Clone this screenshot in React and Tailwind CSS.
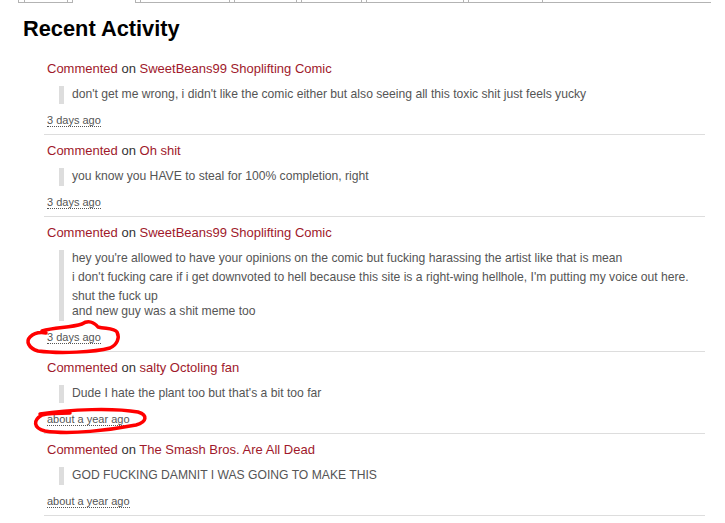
import React from "react";

const items = [
  {
    title: "SweetBeans99 Shoplifting Comic",
    paras: [["don't get me wrong, i didn't like the comic either but also seeing all this toxic shit just feels yucky"]],
    time: "3 days ago",
  },
  {
    title: "Oh shit",
    paras: [["you know you HAVE to steal for 100% completion, right"]],
    time: "3 days ago",
  },
  {
    title: "SweetBeans99 Shoplifting Comic",
    paras: [
      ["hey you're allowed to have your opinions on the comic but fucking harassing the artist like that is mean"],
      ["i don't fucking care if i get downvoted to hell because this site is a right-wing hellhole, I'm putting my voice out here."],
      ["shut the fuck up", "and new guy was a shit meme too"],
    ],
    time: "3 days ago",
  },
  {
    title: "salty Octoling fan",
    paras: [["Dude I hate the plant too but that's a bit too far"]],
    time: "about a year ago",
  },
  {
    title: "The Smash Bros. Are All Dead",
    paras: [["GOD FUCKING DAMNIT I WAS GOING TO MAKE THIS"]],
    time: "about a year ago",
  },
];

function Tab({ w, active }) {
  return (
    <div
      className={
        "h-[3px] border-l border-r border-[#b3b3b3] " + (active ? "" : "border-b")
      }
      style={{ width: w }}
    />
  );
}

function Gap({ w }) {
  return <div className="h-[3px] border-b border-[#b3b3b3]" style={{ width: w }} />;
}

export default function App() {
  return (
    <div
      className="relative w-[725px] h-[523px] bg-white overflow-hidden"
      style={{ fontFamily: '"Liberation Sans", Arial, sans-serif' }}
    >
      <div className="flex">
        <div className="h-[3px] w-[19px] border-r border-[#b3b3b3]" />
        <Gap w={5} />
        <Tab w={44} />
        <Gap w={4} />
        <Tab w={64} active />
        <Gap w={4} />
        <Tab w={90} />
        <Gap w={4} />
        <Tab w={63} />
        <Gap w={4} />
        <Tab w={61} />
        <Gap w={4} />
        <Tab w={98} />
        <Gap w={4} />
        <Tab w={75} />
        <Gap w={168} />
      </div>

      <h1 className="mt-[13px] pl-[23px] text-[21.8px] leading-[26px] font-bold text-black">
        Recent Activity
      </h1>

      <div className="ml-[44px] w-[661px] mt-[11px]">
        {items.map((it, i) => (
          <div key={i} className="border-b border-[#dddddd] pt-[8px] pb-[7px]">
            <div className="pl-[3px] text-[13px] leading-[15px] text-[#333]">
              <span className="text-[#a0192b]">Commented</span> on{" "}
              <span className="text-[#a0192b]">{it.title}</span>
            </div>
            <div className="mt-[10px] ml-[15px] border-l-[5px] border-[#dddddd] pl-[8px] pt-[1px] pb-[2px] text-[12.15px] leading-[15px] text-[#555]">
              {it.paras.map((p, j) => (
                <p key={j} className={j > 0 ? "mt-[4px]" : ""}>
                  {p.map((line, k) => (
                    <React.Fragment key={k}>
                      {k > 0 && <br />}
                      {line}
                    </React.Fragment>
                  ))}
                </p>
              ))}
            </div>
            <div className="mt-[10px] pl-[3px] text-[11px] leading-[13px] text-[#555]">
              <span className="border-b border-dotted border-[#555]">{it.time}</span>
            </div>
          </div>
        ))}
      </div>

      <svg
        className="absolute left-0 top-0 pointer-events-none"
        width="725"
        height="523"
        viewBox="0 0 725 523"
      >
        <path
          d="M 42 331 C 55 327, 70 328, 82 324 C 88 320, 94 322, 98 327 C 106 329, 114 328, 117 332 C 120 338, 117 345, 110 348 C 95 352, 60 354, 38 351 C 28 348, 26 341, 30 337 C 34 333, 40 332, 46 333"
          fill="none"
          stroke="#ff0000"
          strokeWidth="3.5"
          strokeLinecap="round"
          strokeLinejoin="round"
        />
        <path
          d="M 40 414 C 70 409, 115 408, 138 412 C 148 415, 147 422, 136 425 C 110 430, 70 435, 45 431 C 33 428, 33 420, 42 415 C 50 413, 60 413, 70 413"
          fill="none"
          stroke="#ff0000"
          strokeWidth="3.5"
          strokeLinecap="round"
          strokeLinejoin="round"
        />
      </svg>
    </div>
  );
}
